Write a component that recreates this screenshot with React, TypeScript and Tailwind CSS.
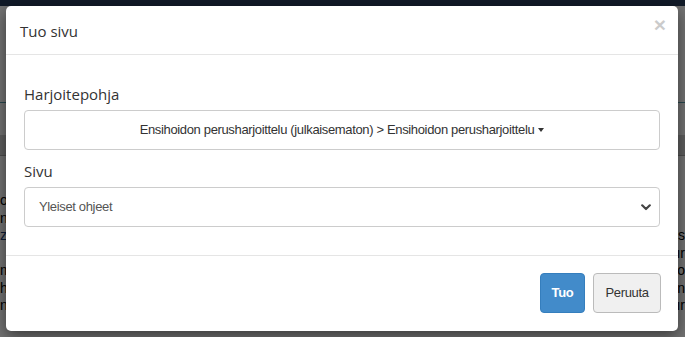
import React from "react";

const pageRows: [string, string][] = [
  ["o,", ""],
  ["n", ""],
  ["z", "ss"],
  ["", "ır"],
  ["m", "o"],
  ["h", "n"],
  ["n", "ır"],
];

const arial = "font-['Liberation_Sans',Arial,sans-serif] text-[13px] tracking-[-0.35px]";

function Caret() {
  return (
    <span className="ml-[4px] inline-block h-0 w-0 border-x-[3px] border-t-[4px] border-x-transparent border-t-[#333] align-middle" />
  );
}

function Chevron() {
  return (
    <svg width="10" height="7" viewBox="0 0 10 7" fill="none">
      <path d="M1.2 1.3 L5 5 L8.8 1.3" stroke="#444" strokeWidth="2.2" strokeLinecap="round" strokeLinejoin="round" />
    </svg>
  );
}

export default function App() {
  return (
    <div className="relative h-[337px] w-[685px] overflow-hidden bg-white font-['Open_Sans',sans-serif]">
      {/* page behind the modal */}
      <div className="flex h-full flex-col font-['Liberation_Sans',sans-serif] text-[14px] text-black">
        <div className="h-[6px] shrink-0 bg-[#263a59]" />
        <div className="h-[96px] shrink-0" />
        <div className="h-px shrink-0 bg-[#5a9fae]" />
        <div className="h-[32px] shrink-0" />
        <div className="h-[20px] shrink-0 bg-[#d2d2d2]" />
        <div className="h-px shrink-0 bg-[#aaa]" />
        <div className="flex flex-col pt-[36px] leading-[17.5px]">
          {pageRows.map(([l, r], i) => (
            <div key={i} className="flex justify-between">
              <span className={i === 2 ? "text-[#1a3d7a]" : ""}>{l}</span>
              <span>{r}</span>
            </div>
          ))}
        </div>
      </div>

      <div className="absolute inset-0 bg-black/[0.55]" />

      {/* modal */}
      <div className="absolute left-[6px] top-[6px] w-[672px] rounded-[5px] bg-white shadow-[0_5px_15px_rgba(0,0,0,0.5)]">
        <div className="flex items-start justify-between border-b border-[#e5e5e5] px-[14px] pb-[13px] pt-[15px]">
          <h4 className="text-[15px] leading-[20px] text-[#333]">Tuo sivu</h4>
          <button className="mr-[-2px] mt-[-7px] font-['Liberation_Sans',sans-serif] text-[21px] font-bold leading-none text-black opacity-20">
            ×
          </button>
        </div>

        <div className="flex flex-col px-[18px] pb-[28px] pt-[28px]">
          <label className="mb-[5px] text-[15px] leading-[22px] text-[#333]">Harjoitepohja</label>
          <button className={`flex h-[40px] items-center justify-center rounded-[4px] border border-[#ccc] bg-white ${arial} text-[#333]`}>
            Ensihoidon perusharjoittelu (julkaisematon) &gt; Ensihoidon perusharjoittelu
            <Caret />
          </button>

          <label className="mb-[5px] mt-[10px] text-[15px] leading-[22px] text-[#333]">Sivu</label>
          <div className={`flex h-[40px] items-center justify-between rounded-[4px] border border-[#ccc] bg-white pl-[14px] pr-[8px] ${arial} text-[#555]`}>
            <span>Yleiset ohjeet</span>
            <Chevron />
          </div>
        </div>

        <div className={`flex justify-end gap-[8px] border-t border-[#e5e5e5] px-[17px] pb-[18px] pt-[17px] ${arial}`}>
          <button className="h-[40px] w-[45px] rounded-[4px] border border-[#357ebd] bg-[#428bca] font-bold text-white">
            Tuo
          </button>
          <button className="h-[40px] w-[68px] rounded-[4px] border border-[#bbb] bg-[#f0f0f0] text-[#333]">
            Peruuta
          </button>
        </div>
      </div>
    </div>
  );
}
